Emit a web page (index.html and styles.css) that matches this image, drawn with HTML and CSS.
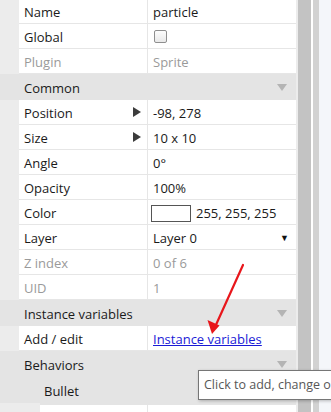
FILE: index.html
```html
<!DOCTYPE html>
<html lang="en">
<head>
  <meta charset="UTF-8" />
  <title>Properties</title>
  <link rel="stylesheet" href="styles.css">
</head>
<body>
  <div class="screen">
    <div class="panel">
      <div class="row"><div class="key">Name</div><div class="val">particle</div></div>
      <div class="row"><div class="key">Global</div><div class="val"><span class="check"></span></div></div>
      <div class="row off"><div class="key">Plugin</div><div class="val">Sprite</div></div>

      <div class="group">Common<span class="fold"></span></div>
      <div class="row"><div class="key">Position<span class="expand"></span></div><div class="val">-98, 278</div></div>
      <div class="row"><div class="key">Size<span class="expand"></span></div><div class="val">10 x 10</div></div>
      <div class="row"><div class="key">Angle</div><div class="val">0°</div></div>
      <div class="row"><div class="key">Opacity</div><div class="val">100%</div></div>
      <div class="row"><div class="key">Color</div><div class="val"><span class="swatch"></span>255, 255, 255</div></div>
      <div class="row"><div class="key">Layer</div><div class="val select">Layer 0<span class="drop">▼</span></div></div>
      <div class="row off"><div class="key">Z index</div><div class="val">0 of 6</div></div>
      <div class="row off"><div class="key">UID</div><div class="val">1</div></div>

      <div class="group">Instance variables<span class="fold"></span></div>
      <div class="row"><div class="key">Add / edit</div><div class="val"><a class="link" href="#">Instance variables</a></div></div>

      <div class="group">Behaviors<span class="fold"></span></div>
      <div class="group sub">Bullet<span class="fold"></span></div>
      <div class="row indent"><div class="key"></div><div class="val"></div></div>
    </div>
    <div class="scrollbar"></div>
    <div class="edge"></div>
    <div class="canvas"></div>

    <!-- annotation arrow drawn over the panel -->
    <svg class="arrow" width="331" height="412" viewBox="0 0 331 412">
      <line x1="243" y1="265" x2="215" y2="327" stroke="#e8161b" stroke-width="2.2" stroke-linecap="round" />
      <path d="M212 334 L207.5 320 L219.5 325.5 Z" fill="#e8161b" />
    </svg>

    <div class="tooltip">Click to add, change or remove behaviors</div>
  </div>
</body>
</html>
```

FILE: styles.css
```css
* {
  margin: 0;
  padding: 0;
  box-sizing: border-box;
}

body {
  font-family: 'Open Sans', 'Noto Sans', Arial, sans-serif;
  font-size: 13px;
  color: #1a1a1a;
  background: #f4f6fa;
  overflow: hidden;
}

.screen {
  position: relative;
  display: flex;
  width: 331px;
  height: 412px;
  overflow: hidden;
}

.panel {
  width: 298px;
  flex-shrink: 0;
  margin-top: -1px;
  padding-right: 2px;
  background: #ececec;
}

.row {
  display: grid;
  grid-template-columns: 129px 1fr;
  height: 25px;
  margin-left: 19px;
  background: #fff;
  border-bottom: 1px solid #e6e6e6;
  line-height: 26px;
}

.row.indent {
  margin-left: 40px;
  grid-template-columns: 108px 1fr;
  border-top: 2px solid #e4e4e4;
  height: 27px;
}

.key {
  position: relative;
  padding-left: 5px;
  border-right: 1px solid #e6e6e6;
  white-space: nowrap;
}

.val {
  padding-left: 5px;
  white-space: nowrap;
  display: flex;
  align-items: center;
}

.off .key,
.off .val {
  color: #9a9a9a;
}

.group {
  position: relative;
  height: 26px;
  line-height: 28px;
  padding-left: 24px;
  background: #e4e4e4;
}

.group.sub {
  padding-left: 44px;
}

.fold {
  position: absolute;
  right: 9px;
  top: 10px;
  width: 0;
  height: 0;
  border-left: 5px solid transparent;
  border-right: 5px solid transparent;
  border-top: 7px solid #b4b4b4;
}

.expand {
  position: absolute;
  right: 6px;
  top: 7px;
  width: 0;
  height: 0;
  border-top: 5.5px solid transparent;
  border-bottom: 5.5px solid transparent;
  border-left: 8px solid #3c3c3c;
}

.check {
  display: inline-block;
  width: 13px;
  height: 13px;
  margin-left: 1px;
  margin-top: -1px;
  border: 1px solid #8f8f8f;
  border-radius: 2px;
  background: linear-gradient(#fdfdfd, #e9e9e9);
}

.swatch {
  display: inline-block;
  width: 40px;
  height: 17px;
  margin-left: -2px;
  margin-right: 5px;
  border: 1px solid #555;
  background: #fff;
}

.select {
  position: relative;
}

.drop {
  position: absolute;
  right: 7px;
  font-size: 9px;
  color: #111;
}

.link {
  color: #1a1ad6;
  text-decoration: underline;
}

.scrollbar {
  width: 13px;
  flex-shrink: 0;
  background: #c3c3c3;
}

.edge {
  width: 8px;
  flex-shrink: 0;
  border-left: 2px solid #fff;
  background: #d2d2d2;
}

.canvas {
  flex: 1;
  background: #f4f6fa;
}

.arrow {
  position: absolute;
  left: 0;
  top: 0;
  pointer-events: none;
}

.tooltip {
  position: absolute;
  left: 198px;
  top: 370px;
  height: 30px;
  padding: 0 5px;
  line-height: 28px;
  font-size: 12.5px;
  color: #575757;
  white-space: nowrap;
  background: #fff;
  border: 1px solid #767676;
  box-shadow: 1px 1px 3px rgba(0, 0, 0, 0.25);
}
```
